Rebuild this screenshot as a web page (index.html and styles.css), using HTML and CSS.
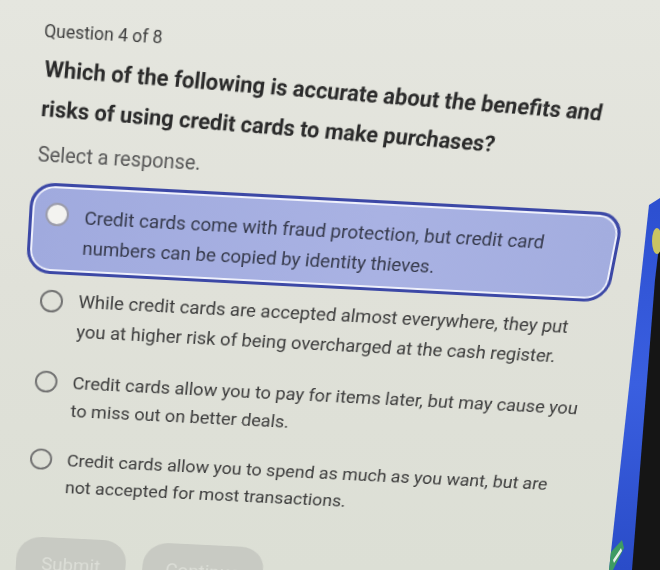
FILE: index.html
```html
<!DOCTYPE html>
<html lang="en">
<head>
<meta charset="utf-8">
<title>Question 4 of 8</title>
<link rel="stylesheet" href="styles.css">
</head>
<body>
<main class="page">
  <p class="counter">Question 4 of 8</p>
  <h1 class="question">Which of the following is accurate about the benefits and<br>risks of using credit cards to make purchases?</h1>
  <p class="hint">Select a response.</p>
  <ul class="options">
    <li class="option option--selected">
      <span class="radio"></span>
      <span class="option-text">Credit cards come with fraud protection, but credit card<br>numbers can be copied by identity thieves.</span>
    </li>
    <li class="option">
      <span class="radio"></span>
      <span class="option-text">While credit cards are accepted almost everywhere, they put<br>you at higher risk of being overcharged at the cash register.</span>
    </li>
    <li class="option">
      <span class="radio"></span>
      <span class="option-text">Credit cards allow you to pay for items later, but may cause you<br>to miss out on better deals.</span>
    </li>
    <li class="option">
      <span class="radio"></span>
      <span class="option-text">Credit cards allow you to spend as much as you want, but are<br>not accepted for most transactions.</span>
    </li>
  </ul>
  <div class="actions">
    <button class="btn btn--submit" type="button">Submit</button>
    <button class="btn btn--continue" type="button">Continue</button>
  </div>
</main>
<svg class="bezel" viewBox="600 0 60 570" width="60" height="570" aria-hidden="true">
  <defs>
    <linearGradient id="blue" x1="0" y1="0" x2="0" y2="1">
      <stop offset="0" stop-color="#2c4fd0"/>
      <stop offset="0.5" stop-color="#3a5fe0"/>
      <stop offset="1" stop-color="#2a4cc8"/>
    </linearGradient>
  </defs>
  <polygon points="649,205 660,198 660,570 609,570" fill="url(#blue)"/>
  <polygon points="660,238 655,280 632,570 660,570" fill="#151515"/>
  <ellipse cx="657" cy="241" rx="5" ry="13" fill="#c9c463"/>
  <polygon points="611,552 622,540 624,548 613,570 609,570" fill="#3e9b63"/>
  <polygon points="613,560 621,548 622,551 614,563" fill="#e8f0ea"/>
</svg>
</body>
</html>
```
FILE: styles.css
```css
html, body {
  margin: 0;
  height: 570px;
  overflow: hidden;
}

body {
  background: linear-gradient(180deg, #e5e6df 0%, #e0e1d9 50%, #dcdfd5 100%);
  font-family: Roboto, "Noto Sans", sans-serif;
  position: relative;
}

/* the page is photographed at a slight tilt */
.page {
  width: 640px;
  box-sizing: border-box;
  padding: 29px 0 0 29px;
  transform-origin: 0 300px;
  transform: perspective(900px) rotateX(-12deg) rotate(3deg);
}

.counter {
  margin: 0 0 0 -1px;
  font-size: 16.5px;
  line-height: 21px;
  color: #3e3e3e;
}

.question {
  margin: 6px 0 0 1px;
  font-size: 21px;
  line-height: 37px;
  font-weight: 700;
  color: #2a2a2a;
  white-space: nowrap;
  transform: rotate(1.4deg);
  transform-origin: 0 50%;
}

.hint {
  margin: 13px 0 0 0;
  font-size: 19.4px;
  line-height: 24px;
  color: #585858;
}

.options {
  list-style: none;
  margin: 13.8px 0 0 -5px;
  padding: 0;
  width: 583px;
  display: flex;
  flex-direction: column;
}

.option {
  display: flex;
  align-items: flex-start;
  gap: 15.5px;
  padding: 8.7px 12px 8.7px 13px;
  border: 3px solid transparent;
  border-radius: 24px;
  font-size: 18.6px;
  line-height: 30.5px;
  color: #3c3c3c;
}

.option--selected {
  padding-top: 15.2px;
  padding-bottom: 8.5px;
  border-color: #3c48a6;
  background: linear-gradient(90deg, #a0aade 0%, #a9b2e3 60%, #a3addf 100%);
  box-shadow: inset 0 0 0 2px #eef0fb;
  color: #363a4c;
}

.radio {
  flex: none;
  width: 23px;
  height: 23px;
  margin-top: 3.5px;
  box-sizing: border-box;
  border: 2px solid #727272;
  border-radius: 50%;
}

.option--selected .radio {
  margin-top: 0.6px;
  background: #f3f3f0;
  border-color: #9b9cab;
}

.option-text {
  flex: 1;
  white-space: nowrap;
}

.actions {
  display: flex;
  gap: 18px;
  margin: 29px 0 0 3px;
}

.btn {
  border: none;
  border-radius: 26px;
  background: #c8cac3;
  color: #dcded7;
  font-family: Roboto, "Noto Sans", sans-serif;
  font-size: 20px;
  line-height: 25px;
  padding: 19px 0;
}

.btn--submit {
  width: 117px;
}

.btn--continue {
  width: 129px;
}

.bezel {
  position: absolute;
  top: 0;
  right: 0;
  pointer-events: none;
}
```
